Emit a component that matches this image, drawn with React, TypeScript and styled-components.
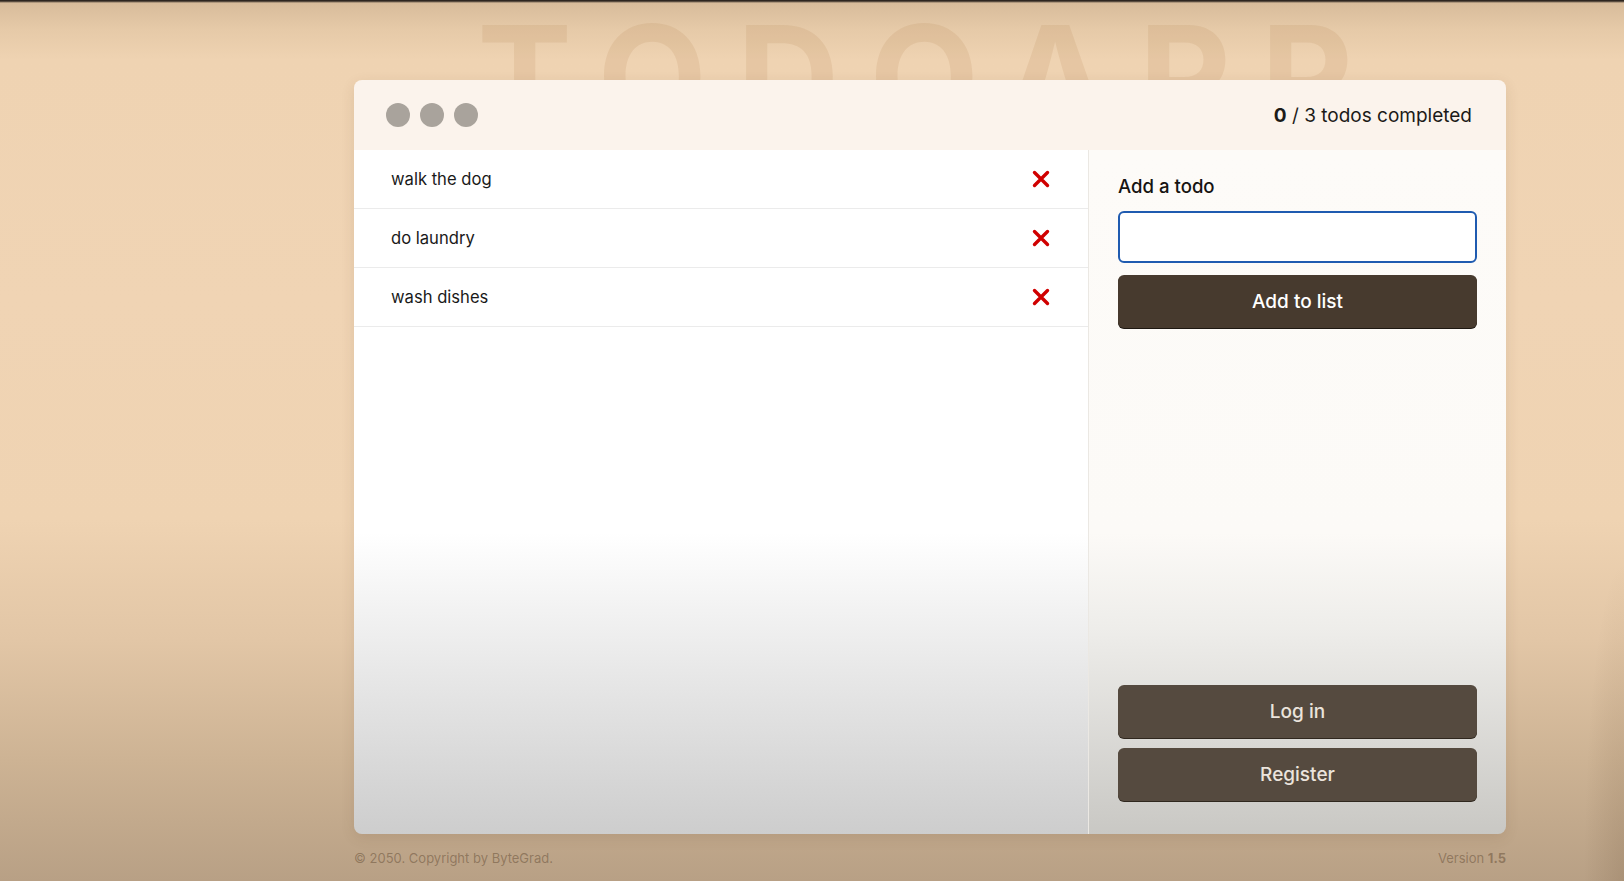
import React from "react";
import styled, { createGlobalStyle } from "styled-components";

const GlobalStyle = createGlobalStyle`
  * { box-sizing: border-box; }
  html, body { margin: 0; padding: 0; }
  body {
    font-family: Inter, "Noto Sans", Arial, sans-serif;
    background:
      radial-gradient(ellipse 40px 320px at 100% 100%, rgba(80,55,30,0.14), rgba(80,55,30,0) 100%),
      linear-gradient(to bottom,
        #2e2620 0px, #2e2620 1px,
        #d8bc9b 3px, #e6caa8 30px, #efd3b2 60px,
        #f0d4b4 300px, #efd3b2 520px, #e2c6a6 640px,
        #cdb394 760px, #b8a085 881px);
    min-height: 881px;
  }
`;

const Page = styled.div`
  min-height: 881px;
  padding-left: 354px;
  display: flex;
  flex-direction: column;
  align-items: flex-start;
`;

const Watermark = styled.h1`
  width: 1152px;
  margin: 6px 0 -66px;
  text-align: center;
  font-family: Inter, "Noto Sans", sans-serif;
  font-weight: 700;
  font-size: 142px;
  line-height: 140px;
  letter-spacing: 30px;
  color: rgba(170, 115, 60, 0.13);
  white-space: nowrap;
  user-select: none;
`;

const Window = styled.main`
  position: relative;
  z-index: 1;
  width: 1152px;
  height: 754px;
  border-radius: 8px;
  overflow: hidden;
  display: flex;
  flex-direction: column;
  box-shadow: 0 4px 14px rgba(90, 60, 30, 0.12);
`;

const Header = styled.header`
  height: 70px;
  flex: none;
  background: #fbf3ec;
  display: flex;
  align-items: center;
  justify-content: space-between;
  padding: 0 34px 0 32px;
`;

const Dots = styled.div`
  display: flex;
  gap: 10px;
`;

const Dot = styled.span`
  width: 24px;
  height: 24px;
  border-radius: 50%;
  background: #a9a39c;
`;

const Counter = styled.p`
  margin: 0;
  font-size: 19px;
  color: #1c1a18;
  b { font-weight: 700; }
`;

const Body = styled.div`
  flex: 1;
  display: grid;
  grid-template-columns: 734px 1fr;
  min-height: 0;
`;

const List = styled.ul`
  list-style: none;
  margin: 0;
  padding: 0;
  background: linear-gradient(to bottom, #ffffff 0%, #ffffff 56%, #efefef 70%, #cdcdcd 100%);
`;

const Row = styled.li`
  height: 59px;
  border-bottom: 1px solid #ebebeb;
  display: flex;
  align-items: center;
  justify-content: space-between;
  padding-left: 37px;
  padding-right: 27px;
  font-size: 16.6px;
  color: #1a1a1a;
`;

const DeleteButton = styled.button`
  width: 40px;
  height: 40px;
  border: none;
  background: none;
  padding: 0;
  display: flex;
  align-items: center;
  justify-content: center;
  cursor: pointer;
`;

const Side = styled.section`
  border-left: 1px solid #ebe8e3;
  background: linear-gradient(to bottom, #fdfbf8 0%, #fcfaf7 56%, #eeedea 70%, #c9c8c4 100%);
  padding: 25px 29px 33px 29px;
  display: flex;
  flex-direction: column;
`;

const Label = styled.label`
  font-size: 18.6px;
  line-height: 22px;
  font-weight: 500;
  color: #161412;
  margin-bottom: 14px;
`;

const Input = styled.input`
  height: 52px;
  border: 2px solid #1f5bb0;
  border-radius: 6px;
  background: #fff;
  outline: none;
  font-size: 16px;
  padding: 0 12px;
  margin-bottom: 12px;
`;

const Button = styled.button<{ $muted?: boolean }>`
  height: 53px;
  border: none;
  border-radius: 6px;
  background: ${(p) => (p.$muted ? "#554a3f" : "#473a2e")};
  color: ${(p) => (p.$muted ? "#ebe4dc" : "#ffffff")};
  box-shadow: 0 1px 0 ${(p) => (p.$muted ? "#2f271e" : "#1e1812")};
  font-family: Inter, "Noto Sans", sans-serif;
  font-size: 19px;
  font-weight: 500;
  cursor: pointer;
`;

const AuthGroup = styled.div`
  margin-top: auto;
  display: flex;
  flex-direction: column;
  gap: 10px;
`;

const Footer = styled.footer`
  width: 1152px;
  margin-top: 16px;
  display: flex;
  justify-content: space-between;
  font-size: 13px;
  line-height: 16px;
  color: rgba(95, 72, 48, 0.48);
  b { font-weight: 700; }
`;

const CrossIcon = () => (
  <svg width="18" height="18" viewBox="0 0 18 18" aria-hidden="true">
    <path d="M2.5 2.5 L15.5 15.5 M15.5 2.5 L2.5 15.5" stroke="#d00000" strokeWidth="3.4" strokeLinecap="round" />
  </svg>
);

const todos = ["walk the dog", "do laundry", "wash dishes"];

export default function App() {
  return (
    <>
      <GlobalStyle />
      <Page>
        <Watermark>TODOAPP</Watermark>
        <Window>
          <Header>
            <Dots>
              <Dot />
              <Dot />
              <Dot />
            </Dots>
            <Counter>
              <b>0</b> / 3 todos completed
            </Counter>
          </Header>
          <Body>
            <List>
              {todos.map((t) => (
                <Row key={t}>
                  <span>{t}</span>
                  <DeleteButton aria-label="delete">
                    <CrossIcon />
                  </DeleteButton>
                </Row>
              ))}
            </List>
            <Side>
              <Label htmlFor="todo">Add a todo</Label>
              <Input id="todo" />
              <Button>Add to list</Button>
              <AuthGroup>
                <Button $muted>Log in</Button>
                <Button $muted>Register</Button>
              </AuthGroup>
            </Side>
          </Body>
        </Window>
        <Footer>
          <span>© 2050. Copyright by ByteGrad.</span>
          <span>
            Version <b>1.5</b>
          </span>
        </Footer>
      </Page>
    </>
  );
}
